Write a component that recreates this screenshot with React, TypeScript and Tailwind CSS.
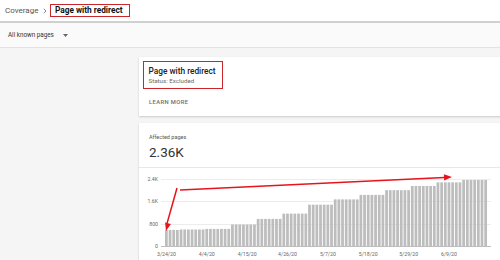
import React from "react";

const segVals = [575, 592, 612, 770, 970, 1160, 1480, 1670, 1830, 2000, 2150, 2280, 2365];

function buildBars() {
  const bars: number[] = [];
  for (let i = 0; i < 88; i++) {
    const seg = i < 4 ? 0 : Math.floor((i - 4) / 7) + 1;
    bars.push(segVals[seg]);
  }
  return bars;
}

const xLabels = ["3/24/20", "4/4/20", "4/15/20", "4/26/20", "5/7/20", "5/18/20", "5/29/20", "6/9/20"];
const yLabels: [string, number][] = [
  ["2.4K", 11],
  ["1.6K", 33],
  ["800", 56],
  ["0", 78],
];

function Chart() {
  const bars = buildBars();
  const pitch = 3.67;
  const x0 = 26;
  const yOf = (v: number) => 78 - (v * 67) / 2400;
  return (
    <svg width="361" height="92" viewBox="0 0 361 92" className="block">
      {yLabels.map(([t, y]) => (
        <g key={t}>
          <line x1="22" x2="352" y1={y + 0.5} y2={y + 0.5} stroke={y === 78 ? "#bdbdbd" : "#ececec"} strokeWidth="1" />
          <text x="19" y={y + 2} textAnchor="end" fontSize="5.2" fill="#666" fontFamily="Roboto, sans-serif">
            {t}
          </text>
        </g>
      ))}
      {bars.map((v, i) => {
        const y = yOf(v);
        return <rect key={i} x={x0 + i * pitch} y={y} width="2.75" height={78 - y} fill="#bdbdbd" />;
      })}
      {xLabels.map((t, i) => (
        <text
          key={t}
          x={x0 + i * 11 * pitch + 1.4}
          y="88"
          textAnchor="middle"
          fontSize="5.2"
          fill="#666"
          fontFamily="Roboto, sans-serif"
        >
          {t}
        </text>
      ))}
      {/* annotation arrows */}
      <line x1="38" y1="20" x2="28" y2="55.5" stroke="#e8141b" strokeWidth="1.5" />
      <polygon points="27,63 31.9,56 26.1,54.5" fill="#e8141b" />
      <line x1="41" y1="22" x2="305.5" y2="9.4" stroke="#e8141b" strokeWidth="1.5" />
      <polygon points="313,9 305.1,12.6 304.9,6.2" fill="#e8141b" />
    </svg>
  );
}

export default function App() {
  return (
    <div className="w-[500px] h-[260px] overflow-hidden bg-[#f5f5f5] font-['Roboto',sans-serif]">
      {/* header */}
      <div className="h-[23px] bg-white border-b-2 border-[#d0d0d0] flex items-center pl-[5px]">
        <span className="text-[8px] text-[#555] leading-none">Coverage</span>
        <svg width="4" height="6" viewBox="0 0 4 6" className="ml-[5px]">
          <polyline points="0.7,0.7 3,3 0.7,5.3" fill="none" stroke="#888" strokeWidth="1" />
        </svg>
        <div className="ml-[3px] h-[13px] w-[80px] border-[1.5px] border-[#c9252b] flex items-center pl-[3.5px]">
          <span className="text-[8.3px] font-bold text-[#111] leading-none whitespace-nowrap">Page with redirect</span>
        </div>
      </div>
      {/* toolbar */}
      <div className="h-[25px] bg-[#fafafa] border-b border-[#e3e3e3] flex items-center pl-[8px]">
        <span className="text-[6.3px] text-[#333] leading-none">All known pages</span>
        <svg width="5" height="3" viewBox="0 0 5 3" className="ml-[9px]">
          <polygon points="0,0 5,0 2.5,3" fill="#666" />
        </svg>
      </div>
      {/* main */}
      <div className="pl-[139px] pt-[9px] flex flex-col gap-[7px]">
        <div className="w-[380px] h-[59px] bg-white shadow-[0_1px_2px_rgba(0,0,0,0.18)] pl-[4px] pt-[4px] flex flex-col">
          <div className="w-[80px] h-[28px] border-[1.5px] border-[#c9252b] pl-[4.5px] pt-[4px] flex flex-col">
            <span className="text-[8.3px] font-medium text-[#202124] leading-[10px] whitespace-nowrap">Page with redirect</span>
            <span className="text-[6.2px] text-[#6b6b6b] leading-[7px] mt-[2px] whitespace-nowrap">Status: Excluded</span>
          </div>
          <span className="ml-[6px] mt-[11px] text-[5.8px] tracking-[0.4px] font-medium text-[#6b6b6b] leading-none">
            LEARN MORE
          </span>
        </div>
        <div className="w-[380px] h-[150px] bg-white shadow-[0_1px_2px_rgba(0,0,0,0.18)] flex flex-col">
          <div className="h-[45px] border-b border-[#e8e8e8] pl-[10px] pt-[11px] flex flex-col">
            <span className="text-[5.5px] text-[#555] leading-[6px]">Affected pages</span>
            <span className="text-[13.5px] text-[#333] leading-[14px] mt-[5px]">2.36K</span>
          </div>
          <Chart />
        </div>
      </div>
    </div>
  );
}
